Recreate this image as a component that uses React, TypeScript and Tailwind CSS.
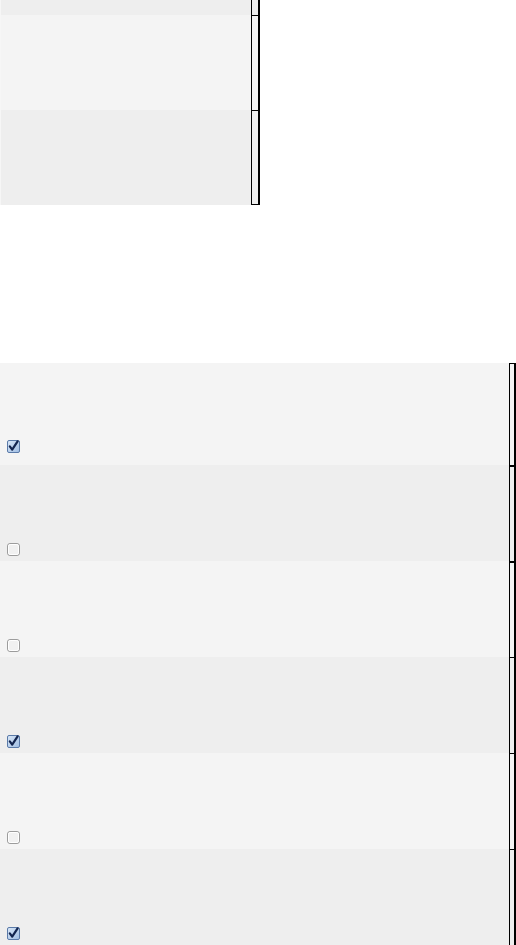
function CheckBox({ checked }: { checked: boolean }) {
  if (checked) {
    return (
      <svg width="13" height="13" viewBox="0 0 13 13" className="block">
        <defs>
          <linearGradient id="cbfill" x1="0" y1="0" x2="1" y2="1">
            <stop offset="0" stopColor="#d9e7f7" />
            <stop offset="1" stopColor="#9fbde3" />
          </linearGradient>
        </defs>
        <rect x="0.5" y="0.5" width="12" height="12" rx="1.5" fill="url(#cbfill)" stroke="#5a7aa8" />
        <path d="M2.8 6.4 L5.2 9.6 L10.6 1.4" fill="none" stroke="#13254f" strokeWidth="2.2" strokeLinecap="round" strokeLinejoin="round" />
      </svg>
    );
  }
  return (
    <svg width="13" height="13" viewBox="0 0 13 13" className="block">
      <rect x="0.5" y="0.5" width="12" height="12" rx="2.5" fill="#f1f1f1" stroke="#9c9c9c" />
      <rect x="1.5" y="1.5" width="10" height="10" rx="1.8" fill="none" stroke="#ffffff" />
    </svg>
  );
}

const topRows = [
  { h: "h-[15px]", bg: "bg-[#eeeeee]" },
  { h: "h-[95px]", bg: "bg-[#f4f4f4]" },
  { h: "h-[95px]", bg: "bg-[#eeeeee]" },
];

const bottomRows = [
  { h: "h-[102px]", bg: "bg-[#f4f4f4]", checked: true, pt: "pt-[77px]" },
  { h: "h-[96px]", bg: "bg-[#eeeeee]", checked: false, pt: "pt-[78px]" },
  { h: "h-[96px]", bg: "bg-[#f4f4f4]", checked: false, pt: "pt-[78px]" },
  { h: "h-[96px]", bg: "bg-[#eeeeee]", checked: true, pt: "pt-[78px]" },
  { h: "h-[96px]", bg: "bg-[#f4f4f4]", checked: false, pt: "pt-[78px]" },
  { h: "h-[96px]", bg: "bg-[#eeeeee]", checked: true, pt: "pt-[78px]" },
];

export default function App() {
  return (
    <div className="h-[945px] w-[516px] overflow-hidden bg-white font-['Liberation_Sans',sans-serif]">
      <div className="flex w-[260px] flex-col">
        {topRows.map((r, i) => (
          <div key={i} className={`flex ${r.h}`}>
            <div className={`w-[251px] ${r.bg} border-l border-l-[#f6f6f6]`} />
            <div className={`w-[9px] ${r.bg} border-r-2 border-l border-black ${i > 0 ? "border-t" : ""} ${i === topRows.length - 1 ? "border-b" : ""}`} />
          </div>
        ))}
      </div>

      <div className="mt-[158px] flex w-[516px] flex-col">
        {bottomRows.map((r, i) => (
          <div key={i} className={`flex ${r.h}`}>
            <div className={`flex-1 ${r.bg} pl-[7px] ${r.pt}`}>
              <CheckBox checked={r.checked} />
            </div>
            <div className={`w-[7px] ${r.bg} border-l border-r-2 border-black ${i === 0 ? "border-t" : i < 3 ? "border-t-2" : "border-t"}`} />
          </div>
        ))}
      </div>
    </div>
  );
}
